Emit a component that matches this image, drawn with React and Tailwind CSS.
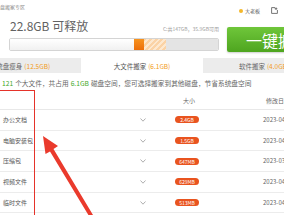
const rows = [
  { name: '办公文档', size: '2.4GB', date: '2023-04-12 16:32' },
  { name: '电脑安装包', size: '1.5GB', date: '2023-04-10 09:15' },
  { name: '压缩包', size: '647MB', date: '2023-03-28 14:02' },
  { name: '视频文件', size: '629MB', date: '2023-04-06 20:47' },
  { name: '临时文件', size: '513MB', date: '2023-04-13 11:20' },
];

function Chevron() {
  return (
    <svg width="6" height="4" viewBox="0 0 6 4" className="text-[#9a9a9a]">
      <path d="M0.5 0.5 L3 3.2 L5.5 0.5" fill="none" stroke="currentColor" strokeWidth="0.8" />
    </svg>
  );
}

export default function App() {
  return (
    <div className="relative w-[284px] h-[215px] overflow-hidden bg-white text-[#666] font-['Noto_Sans_CJK_SC',sans-serif]">
      {/* header */}
      <div className="flex h-[17px]">
        <div className="pt-[4px] text-[5px] leading-[6px] text-[#8a8a8a]">盘搬家专区</div>
        <div className="ml-auto flex items-start pt-[7px] pr-[6px]">
          <div className="flex items-center gap-[2px] mt-[1px]">
            <span className="w-[4px] h-[4px] rounded-full bg-[#f4b72a]"></span>
            <span className="text-[5px] leading-[6px] text-[#555]">大老板</span>
          </div>
          <svg width="7" height="7" viewBox="0 0 7 7" className="shrink-0 ml-[11px] text-[#666]">
            <path d="M4 0.6 H0.6 V6.4 H6.4 V3" fill="none" stroke="currentColor" strokeWidth="0.9" />
            <path d="M5 0.4 V3 M3.7 1.7 H6.3" stroke="currentColor" strokeWidth="0.9" />
          </svg>
        </div>
      </div>

      {/* summary + button */}
      <div className="flex h-[38px]">
        <div className="pl-[9px] w-[219px] shrink-0">
          <div className="flex justify-between h-[21px]">
            <div className="pt-[1px] pl-[1px] text-[12px] leading-[16px] text-[#626262]">22.8GB 可释放</div>
            <div className="pt-[9px] text-[5px] leading-[6px] text-[#a0a0a0]">C:共147GB，35.9GB可用</div>
          </div>
          <div className="flex h-[13px] rounded-[2px] border border-[#d4d4d4] overflow-hidden">
            <div className="w-[124px] bg-gradient-to-b from-white to-[#f1f1f1]"></div>
            <div className="w-[10px] bg-gradient-to-b from-[#f7931e] to-[#ec6f0a]"></div>
            <div className="w-[22px] bg-[repeating-linear-gradient(135deg,#fbd3a6_0px,#fbd3a6_2px,#fde8cf_2px,#fde8cf_4px)]"></div>
            <div className="flex-1 bg-[#e4e4e4]"></div>
          </div>
        </div>
        <div className="shrink-0 ml-[8px] mt-[10px] h-[25px] w-[70px] rounded-[2px] bg-gradient-to-b from-[#6fc63a] to-[#4ea51f] shadow-[0_1px_2px_rgba(0,0,0,0.2)] flex items-center pl-[19px]">
          <span className="text-[16px] leading-[18px] text-white whitespace-nowrap">一键搬家</span>
        </div>
      </div>

      {/* tabs */}
      <div className="flex h-[15px] mt-[3px] ml-[-41px] w-[366px] text-[6.5px] leading-[8px]">
        <div className="shrink-0 w-[122px] bg-[#ececec] flex items-center justify-center whitespace-nowrap">
          系统盘瘦身 <span className="ml-[2px] text-[#f29b21]">(12.5GB)</span>
        </div>
        <div className="shrink-0 w-[122px] bg-white flex items-center justify-center whitespace-nowrap text-[#555]">
          大文件搬家 <span className="ml-[2px] text-[#f29b21]">(6.1GB)</span>
        </div>
        <div className="shrink-0 w-[122px] bg-[#ececec] flex items-center justify-center whitespace-nowrap">
          软件搬家 <span className="ml-[2px] text-[#f29b21]">(4.0GB)</span>
        </div>
      </div>

      {/* info line */}
      <div className="h-[20px] flex items-center pl-[2px] text-[6.7px] leading-[8px] whitespace-nowrap text-[#666]">
        <span className="text-[#3fa827]">121</span>
        <span className="ml-[2px]">个大文件，共占用</span>
        <span className="mx-[2px] text-[#3fa827]">6.1GB</span>
        <span>磁盘空间，您可选择搬家到其他磁盘，节省系统盘空间</span>
      </div>

      {/* table header */}
      <div className="flex h-[17px] items-center border-b border-[#e8e8e8] text-[6px] leading-[8px] text-[#666] whitespace-nowrap">
        <div className="shrink-0 w-[175px]"></div>
        <div className="shrink-0 w-[88px] pl-[8px]">大小</div>
        <div className="shrink-0 pl-[3px]">修改日期</div>
      </div>

      {/* rows */}
      {rows.map((r) => (
        <div key={r.name} className="flex h-[20.7px] items-center border-b border-[#ececec] text-[6px] leading-[8px] whitespace-nowrap">
          <div className="shrink-0 w-[140px] pl-[3px] text-[#555]">{r.name}</div>
          <div className="shrink-0 w-[35px] flex items-center">
            <Chevron />
          </div>
          <div className="shrink-0 w-[88px] flex items-center">
            <span className="w-[24px] h-[7px] rounded-full bg-[#e9541f] text-white text-[5px] leading-[7px] text-center">{r.size}</span>
          </div>
          <div className="shrink-0 text-[#666]">{r.date}</div>
        </div>
      ))}

      {/* annotation: red box */}
      <div className="absolute left-[-10px] top-[90px] w-[44.5px] h-[140px] border-[1.5px] border-[#e5332a]"></div>

      {/* annotation: arrow */}
      <svg className="absolute left-0 top-0" width="284" height="215" viewBox="0 0 284 215">
        <polygon points="43,136 58,146 53.5,149 93,215 89,216 50,151.5 45.5,154" fill="#ea3a2c" />
      </svg>
    </div>
  );
}
